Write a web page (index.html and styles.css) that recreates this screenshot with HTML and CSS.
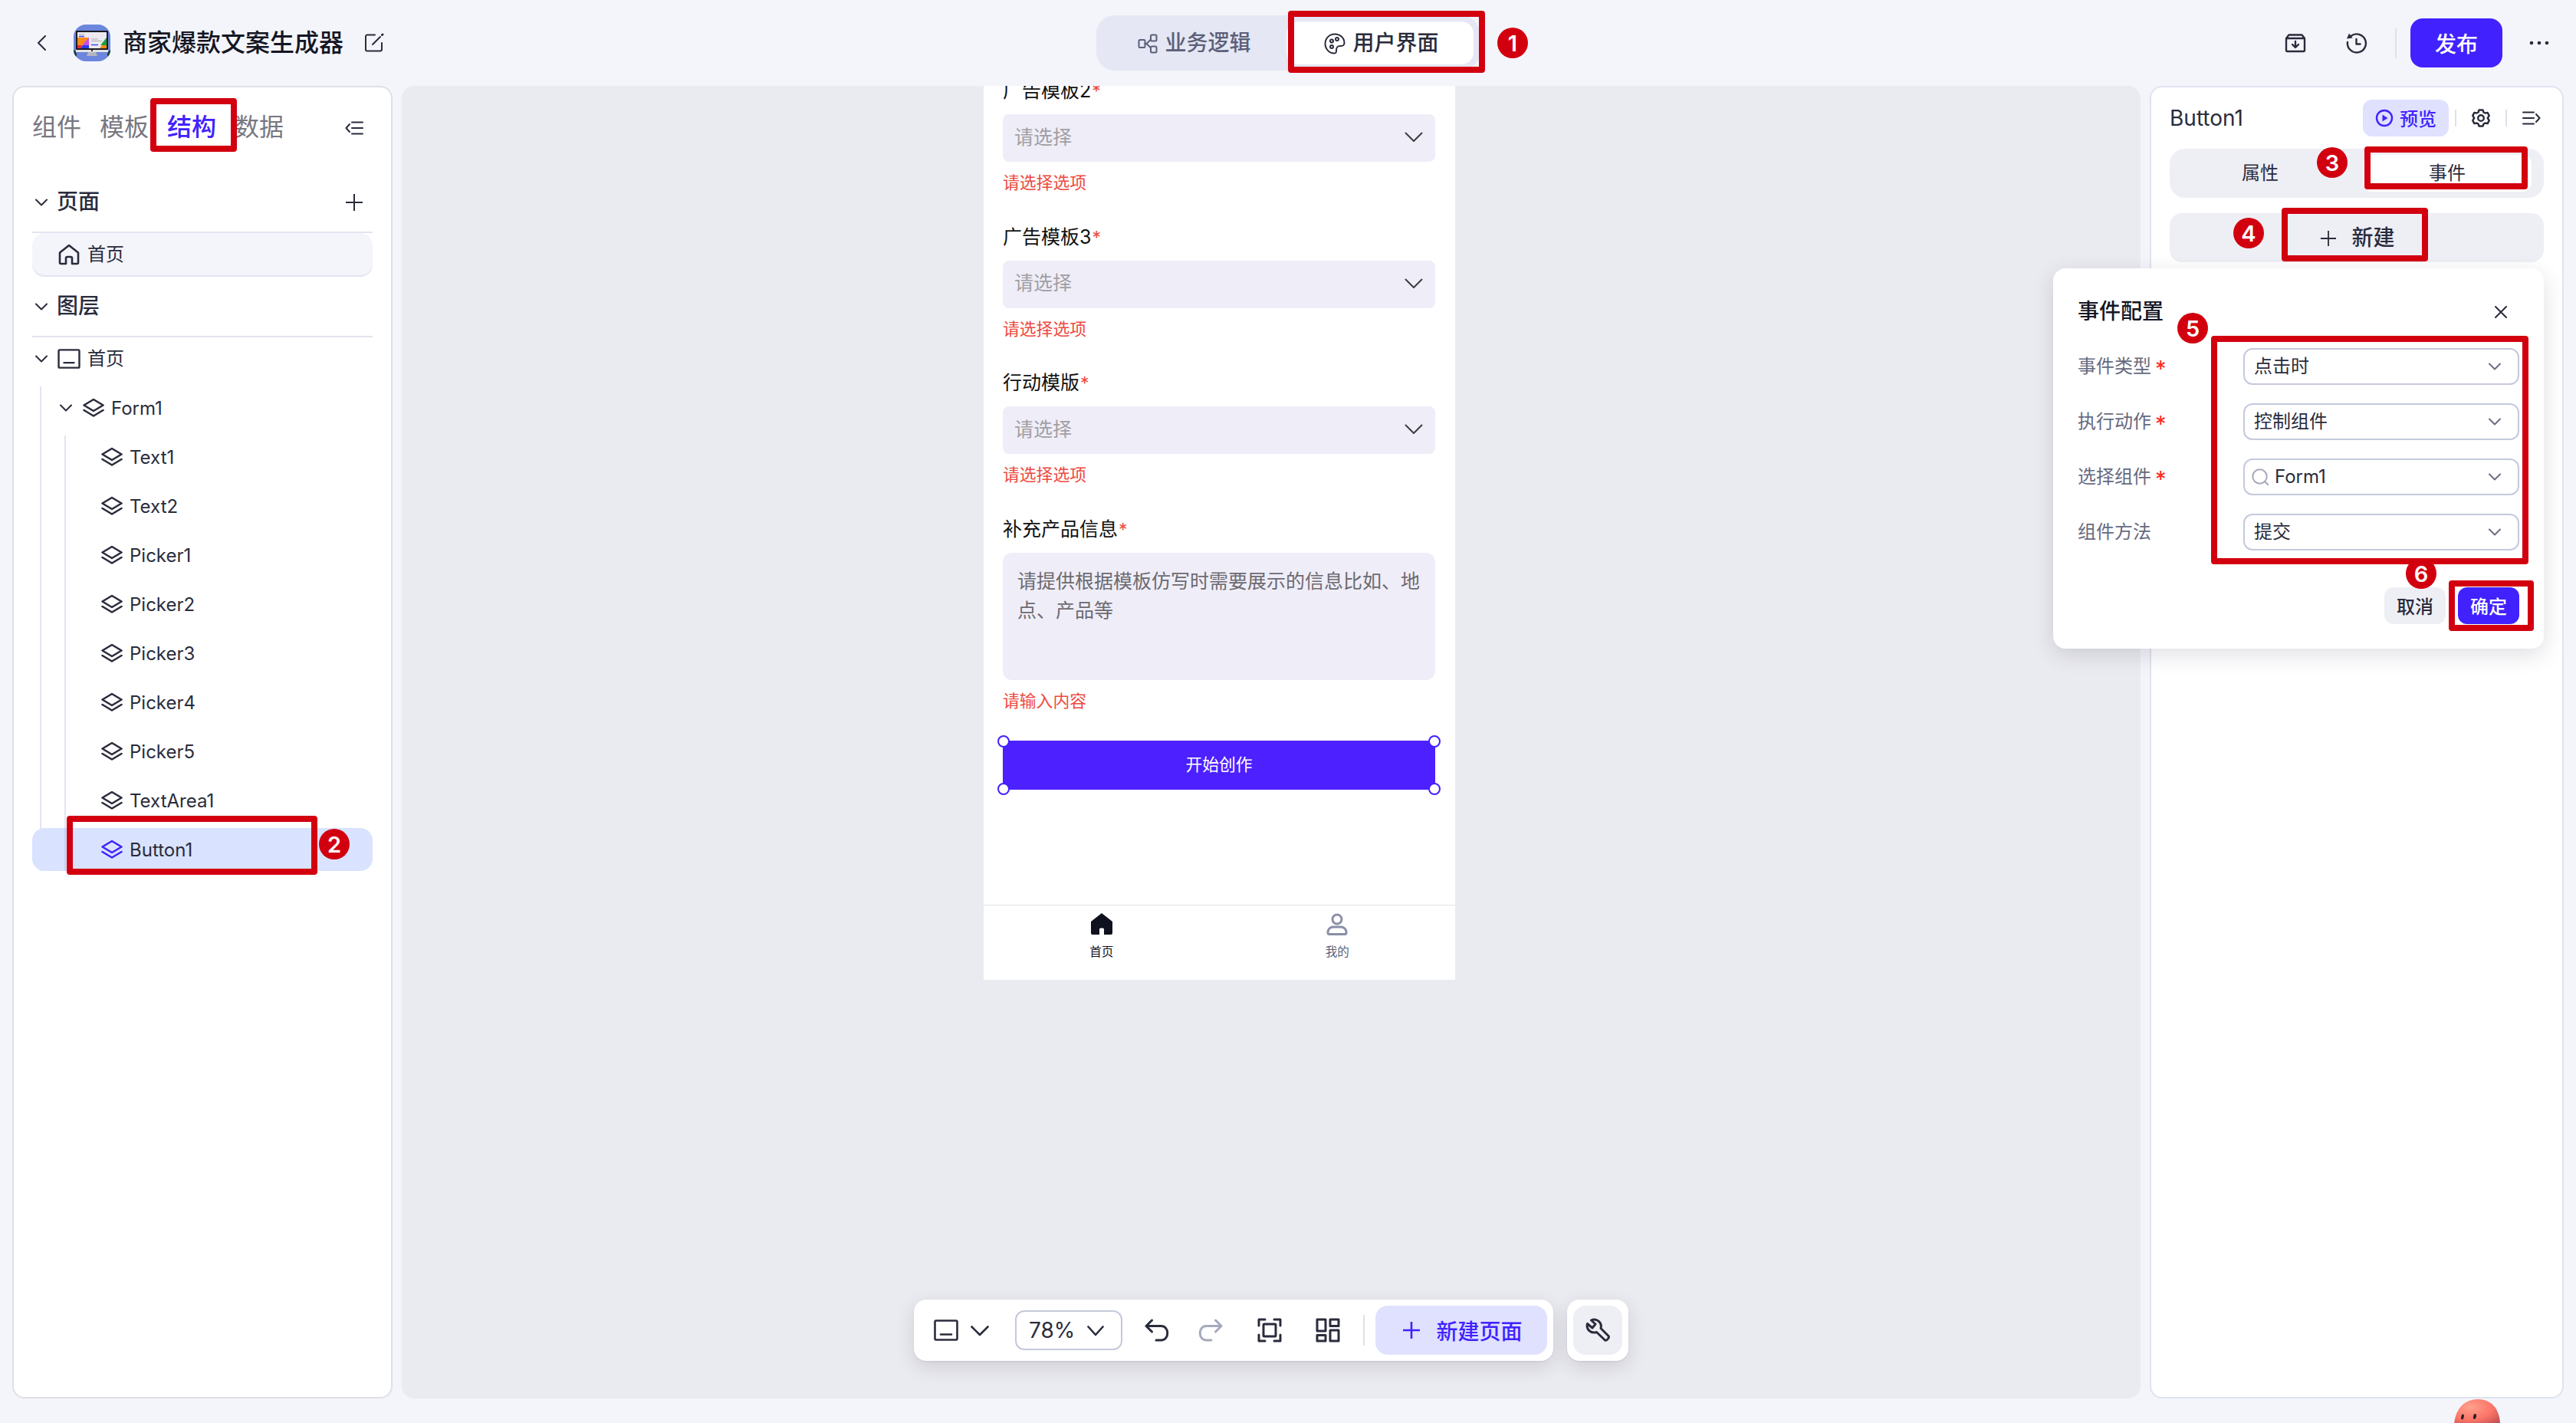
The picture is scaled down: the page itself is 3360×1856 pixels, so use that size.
FILE: index.html
```
<!DOCTYPE html>
<html lang="zh-CN">
<head>
    <meta charset="UTF-8">
    <title>商家爆款文案生成器</title>
    <link rel="stylesheet" href="styles.css">
</head>
<body>
    <!-- shared icons -->
    <svg class="sprite" width="0" height="0">
        <symbol id="i-down" viewBox="0 0 16 10"><path d="M1 1.500l7 7 7-7"/></symbol>
        <symbol id="i-layers" viewBox="0 0 28 26"><path d="M14 2L26.500 9.500 14 17 1.500 9.500z"/><path d="M1.500 16L14 23.500 26.500 16"/></symbol>
        <symbol id="i-frame" viewBox="0 0 32 28"><rect x="1.500" y="1.500" width="29" height="25" rx="1.500"/><path d="M9 19.500h14"/></symbol>
        <symbol id="i-plus" viewBox="0 0 22 22"><path d="M11 0v22M0 11h22"/></symbol>
    </svg>

    <header class="topbar">
        <div class="topbar-left">
            <svg class="icon back" width="12" height="20" viewBox="0 0 12 20"><path d="M11 1L2 10l9 9"/></svg>
            <svg class="app-logo" width="48" height="48" viewBox="0 0 48 48">
                <rect width="48" height="48" rx="16" fill="#6b86dc"/>
                <path d="M0 33c4 2 4 6 4 9-3-2-4-5-4-9zM48 33c-4 2-4 6-4 9 3-2 4-5 4-9z" fill="#163a2c"/>
                <rect x="3" y="8" width="42" height="25" rx="1" fill="#1d1b22"/>
                <rect x="5" y="10" width="38" height="21" fill="#eceaf0"/>
                <path d="M5 17h15v14H5z" fill="#ff8a14"/>
                <path d="M20 17v10h-9z" fill="#cc4be8"/>
                <path d="M9 31l3-4h8v4z" fill="#2b39f0"/>
                <path d="M5 27h6l-2 4H5z" fill="#e8283c"/>
                <path d="M43 17v10h-8z" fill="#16a33a"/>
                <path d="M34 31l3-4h6v4z" fill="#ff8a14"/>
                <path d="M7 15.500h7M23 26.500h9" stroke="#3c4be8" stroke-width="1.500"/>
                <path d="M7 13h7M23 19h9M23 21.500h14" stroke="#aaa" stroke-width="1"/>
                <path d="M3 33h42v3H3z" fill="#e2e2e6"/>
                <path d="M19 36h10l2 5H17z" fill="#b4b6bf"/>
                <rect x="23" y="33" width="2" height="2" fill="#333"/>
            </svg>
            <h1 class="app-title">商家爆款文案生成器</h1>
            <svg class="icon" width="26" height="26" viewBox="0 0 26 26"><path d="M14 2.500H4A2 2 0 0 0 2 4.500v17a2 2 0 0 0 2 2h17a2 2 0 0 0 2-2V13M11 15L21 5"/><path d="M23.500 2.500l.5-.5" stroke-width="3"/></svg>
        </div>
        <div class="mode-switch">
            <div class="mode">
                <svg class="icon" width="26" height="26" viewBox="0 0 26 26"><rect x="1.500" y="8" width="8" height="10" rx="1.500"/><rect x="17" y="1.500" width="7.500" height="8" rx="1.500"/><rect x="17" y="16.500" width="7.500" height="8" rx="1.500"/><path d="M9.500 13h2M16.500 8l-5 5 5 5"/></svg>
                <span>业务逻辑</span>
            </div>
            <div class="mode active">
                <svg class="icon" width="28" height="28" viewBox="0 0 28 28"><path d="M14 1.500C7 1.500 1.500 7 1.500 14S7 26.500 13 26.500c3 0 3-1.500 3-3.500 0-4 1-6 5-6 3.500 0 5.500-.5 5.500-4C26.500 6.500 21 1.500 14 1.500z"/><circle cx="10" cy="10.500" r="2"/><circle cx="17" cy="8" r="2"/><circle cx="10" cy="18" r="2"/></svg>
                <span>用户界面</span>
            </div>
        </div>
        <div class="topbar-right">
            <svg class="icon mid" width="28" height="26" viewBox="0 0 28 26"><path d="M2 7v15.500a1.500 1.500 0 0 0 1.500 1.500h21a1.500 1.500 0 0 0 1.500-1.500V7zM2 7l3.500-4.500h17L26 7M14 11v7.500M10 15l4 4 4-4"/></svg>
            <svg class="icon mid history" width="28" height="28" viewBox="0 0 28 28"><path d="M6.500 5A12 12 0 1 1 2 13M13.500 9v6.500h5"/><path class="fill" d="M4 1.500l4.500 6-7.500 1z"/></svg>
            <span class="v-line"></span>
            <button class="publish">发布</button>
            <svg class="dots" width="26" height="6" viewBox="0 0 26 6"><circle cx="3" cy="3" r="2.300"/><circle cx="13" cy="3" r="2.300"/><circle cx="23" cy="3" r="2.300"/></svg>
        </div>
    </header>

    <main class="workspace">
        <aside class="panel structure">
            <nav class="side-tabs">
                <span>组件</span>
                <span>模板</span>
                <span class="active">结构</span>
                <span>数据</span>
                <svg class="icon collapse" width="24" height="18" viewBox="0 0 24 18"><path d="M9 1.500h14M9 9h14M9 16.500h14M6 4L1.500 9 6 14"/></svg>
            </nav>
            <div class="section pages">
                <svg class="icon" width="16" height="10"><use href="#i-down"/></svg>
                <span>页面</span>
                <svg class="icon add" width="22" height="22"><use href="#i-plus"/></svg>
            </div>
            <div class="page-item">
                <svg class="icon bold" width="28" height="28" viewBox="0 0 28 28"><path d="M2 11.500L14 2l12 9.500v13a1.500 1.500 0 0 1-1.500 1.500H18v-7a2 2 0 0 0-2-2h-4a2 2 0 0 0-2 2v7H3.500A1.500 1.500 0 0 1 2 24.500z"/></svg>
                <span>首页</span>
            </div>
            <div class="section">
                <svg class="icon" width="16" height="10"><use href="#i-down"/></svg>
                <span>图层</span>
            </div>
            <div class="node root">
                <svg class="icon" width="16" height="10"><use href="#i-down"/></svg>
                <svg class="icon frame bold" width="30" height="26"><use href="#i-frame"/></svg>
                <span>首页</span>
            </div>
            <div class="branch">
                <div class="node level-1">
                    <svg class="icon" width="16" height="10"><use href="#i-down"/></svg>
                    <svg class="icon bold" width="28" height="26"><use href="#i-layers"/></svg>
                    <span>Form1</span>
                </div>
                <div class="branch inner">
                    <div class="node leaf"><svg class="icon bold" width="28" height="26"><use href="#i-layers"/></svg><span>Text1</span></div>
                    <div class="node leaf"><svg class="icon bold" width="28" height="26"><use href="#i-layers"/></svg><span>Text2</span></div>
                    <div class="node leaf"><svg class="icon bold" width="28" height="26"><use href="#i-layers"/></svg><span>Picker1</span></div>
                    <div class="node leaf"><svg class="icon bold" width="28" height="26"><use href="#i-layers"/></svg><span>Picker2</span></div>
                    <div class="node leaf"><svg class="icon bold" width="28" height="26"><use href="#i-layers"/></svg><span>Picker3</span></div>
                    <div class="node leaf"><svg class="icon bold" width="28" height="26"><use href="#i-layers"/></svg><span>Picker4</span></div>
                    <div class="node leaf"><svg class="icon bold" width="28" height="26"><use href="#i-layers"/></svg><span>Picker5</span></div>
                    <div class="node leaf"><svg class="icon bold" width="28" height="26"><use href="#i-layers"/></svg><span>TextArea1</span></div>
                    <div class="node leaf selected"><svg class="icon bold" width="28" height="26"><use href="#i-layers"/></svg><span>Button1</span></div>
                </div>
            </div>
        </aside>

        <section class="canvas">
            <div class="phone">
                <div class="phone-form">
                    <div class="field first">
                        <label>广告模板2<i>*</i></label>
                        <div class="picker"><span>请选择</span><svg class="icon" width="24" height="14" viewBox="0 0 24 14"><path d="M1.500 1.500L12 12 22.500 1.500"/></svg></div>
                        <p class="error">请选择选项</p>
                    </div>
                    <div class="field">
                        <label>广告模板3<i>*</i></label>
                        <div class="picker"><span>请选择</span><svg class="icon" width="24" height="14" viewBox="0 0 24 14"><path d="M1.500 1.500L12 12 22.500 1.500"/></svg></div>
                        <p class="error">请选择选项</p>
                    </div>
                    <div class="field">
                        <label>行动模版<i>*</i></label>
                        <div class="picker"><span>请选择</span><svg class="icon" width="24" height="14" viewBox="0 0 24 14"><path d="M1.500 1.500L12 12 22.500 1.500"/></svg></div>
                        <p class="error">请选择选项</p>
                    </div>
                    <div class="field">
                        <label>补充产品信息<i>*</i></label>
                        <div class="textarea">请提供根据模板仿写时需要展示的信息比如、地点、产品等</div>
                        <p class="error">请输入内容</p>
                    </div>
                    <div class="submit">
                        开始创作
                        <b class="handle tl"></b><b class="handle tr"></b><b class="handle bl"></b><b class="handle br"></b>
                    </div>
                </div>
                <div class="tabbar">
                    <div class="tab current">
                        <svg width="28" height="28" viewBox="0 0 28 28"><path d="M14 0L28 11v15a2 2 0 0 1-2 2h-9v-7a1.500 1.500 0 0 0-1.500-1.500h-3A1.500 1.500 0 0 0 11 21v7H2a2 2 0 0 1-2-2V11z" fill="#0f111e"/></svg>
                        <span>首页</span>
                    </div>
                    <div class="tab">
                        <svg class="icon user" width="28" height="30" viewBox="0 0 28 30"><circle cx="14" cy="8" r="6"/><path d="M2 25.500V25c0-4 3-7 7-7h10c4 0 7 3 7 7v.5a2 2 0 0 1-2 2H4a2 2 0 0 1-2-2z"/></svg>
                        <span>我的</span>
                    </div>
                </div>
            </div>

            <div class="dock">
                <div class="toolbar">
                    <svg class="icon bold" width="34" height="28"><use href="#i-frame"/></svg>
                    <svg class="icon bold t-down" width="24" height="14" viewBox="0 0 24 14"><path d="M1.500 1.500L12 12 22.500 1.500"/></svg>
                    <div class="zoom-box">
                        <span>78%</span>
                        <svg class="icon bold" width="22" height="14" viewBox="0 0 22 14"><path d="M1.500 1.500L11 12l9.500-10.500"/></svg>
                    </div>
                    <svg class="icon heavy undo" width="32" height="30" viewBox="0 0 32 30"><path d="M9.500 2L2 9.500 9.500 17M2 9.500h19.500c11 0 11 18.500 0 18.500H15"/></svg>
                    <svg class="icon heavy redo" width="32" height="30" viewBox="0 0 32 30"><path d="M22.500 2L30 9.500 22.500 17M30 9.500H10.500C-.5 9.500-.5 28 10.500 28H17"/></svg>
                    <svg class="icon heavy fit" width="32" height="32" viewBox="0 0 32 32"><rect x="8" y="8" width="16" height="16" rx="1"/><path d="M2 10V2h8M22 2h8v8M30 22v8h-8M10 30H2v-8"/></svg>
                    <svg class="icon heavy grid" width="32" height="32" viewBox="0 0 32 32"><rect x="2" y="2" width="11" height="15"/><rect x="19" y="2" width="11" height="8.500"/><rect x="2" y="22.500" width="11" height="7.500"/><rect x="19" y="16" width="11" height="14"/></svg>
                    <span class="v-line"></span>
                    <button class="new-page"><svg class="icon bold" width="22" height="22"><use href="#i-plus"/></svg>新建页面</button>
                </div>
                <div class="tool-box">
                    <div class="tool-btn">
                        <svg class="icon heavy" width="32" height="32" viewBox="0 0 32 32"><path d="M7.500 3C14.500-.5 22 6 20 13.500l10 10c1.500 2-2 6.500-4.500 5.500L14.500 18.500C7 21 .5 14.500 2.500 7.500L9 13l4-5z"/></svg>
                    </div>
                </div>
            </div>
        </section>

        <aside class="panel inspector">
            <div class="insp-head">
                <span class="insp-name">Button1</span>
                <button class="preview">
                    <svg class="icon mid" width="24" height="24" viewBox="0 0 24 24"><circle cx="12" cy="12" r="10"/><path class="fill" d="M9.500 7.500l7 4.500-7 4.500z"/></svg>
                    <span>预览</span>
                </button>
                <span class="v-line"></span>
                <svg class="icon mid gear" width="24" height="24" viewBox="0 0 24 24"><path d="M9.500 1.500h5l1 3 2 1 3.200-.6 2 4L20.800 12l1.900 3.100-2 4-3.200-.6-2 1-1 3h-5l-1-3-2-1-3.200.6-2-4L3.200 12 1.300 8.900l2-4 3.200.6 2-1z"/><circle cx="12" cy="12" r="3.800"/></svg>
                <span class="v-line"></span>
                <svg class="icon" width="24" height="18" viewBox="0 0 24 18"><path d="M1 1.500h14M1 9h14M1 16.500h14M18 4l4.500 5-4.500 5"/></svg>
            </div>
            <div class="insp-tabs">
                <span>属性</span>
                <span class="active">事件</span>
            </div>
            <div class="new-event">
                <svg class="icon" width="20" height="20" viewBox="0 0 22 22"><path d="M11 0v22M0 11h22"/></svg>
                <span>新建</span>
            </div>
        </aside>
    </main>

    <!-- event dialog, floats over canvas and inspector -->
    <div class="dialog">
        <div class="dialog-head">
            <h2>事件配置</h2>
            <svg class="icon" width="16" height="16" viewBox="0 0 16 16"><path d="M1 1l14 14M15 1L1 15"/></svg>
        </div>
        <div class="row">
            <span class="row-label">事件类型<i>*</i></span>
            <div class="select"><span>点击时</span><svg class="icon" width="16" height="10"><use href="#i-down"/></svg></div>
        </div>
        <div class="row">
            <span class="row-label">执行动作<i>*</i></span>
            <div class="select"><span>控制组件</span><svg class="icon" width="16" height="10"><use href="#i-down"/></svg></div>
        </div>
        <div class="row">
            <span class="row-label">选择组件<i>*</i></span>
            <div class="select search">
                <svg class="icon glass" width="22" height="22" viewBox="0 0 22 22"><circle cx="10.500" cy="10.500" r="9.200"/><path d="M17 17l4.500 4.500"/></svg>
                <span>Form1</span><svg class="icon" width="16" height="10"><use href="#i-down"/></svg>
            </div>
        </div>
        <div class="row">
            <span class="row-label">组件方法</span>
            <div class="select"><span>提交</span><svg class="icon" width="16" height="10"><use href="#i-down"/></svg></div>
        </div>
        <div class="dialog-foot">
            <button class="cancel">取消</button>
            <button class="ok">确定</button>
        </div>
    </div>

    <!-- help assistant peeking from the bottom edge -->
    <svg class="mascot" width="60" height="31" viewBox="0 0 60 31">
        <defs>
            <radialGradient id="skin" cx="0.35" cy="0.3" r="0.9"><stop offset="0" stop-color="#ffa08c"/><stop offset="0.55" stop-color="#fb7468"/><stop offset="1" stop-color="#b84a50"/></radialGradient>
        </defs>
        <path d="M0 34C1 12 14 0 31 0c17 0 29 12 29 34z" fill="url(#skin)"/>
        <ellipse cx="11" cy="23" rx="1.800" ry="3.500" transform="rotate(10 11 23)" fill="#2c2426"/>
        <ellipse cx="27" cy="22.500" rx="2" ry="3.500" transform="rotate(10 27 22.500)" fill="#2c2426"/>
    </svg>

    <!-- tutorial marks -->
    <div class="badge b1">1</div>
    <div class="badge b2">2</div>
    <div class="badge b3">3</div>
    <div class="badge b4">4</div>
    <div class="badge b5">5</div>
    <div class="badge b6">6</div>
    <div class="mark m-mode"></div>
    <div class="mark m-tab"></div>
    <div class="mark m-node"></div>
    <div class="mark m-event"></div>
    <div class="mark m-new"></div>
    <div class="mark m-fields"></div>
    <div class="mark m-ok"></div>
</body>
</html>
```
FILE: styles.css
```
* {
    box-sizing: border-box;
}

body {
    margin: 0;
    width: 3360px;
    height: 1856px;
    overflow: hidden;
    position: relative;
    display: flex;
    flex-direction: column;
    background: #f4f5fb;
    color: #2a2c3c;
    font-family: Inter, "Noto Sans CJK SC", sans-serif;
    font-size: 24px;
    line-height: 1.4;
}

h1, h2, p {
    margin: 0;
}

i {
    font-style: normal;
}

button {
    border: none;
    padding: 0;
    font-family: inherit;
    font-weight: 500;
    color: inherit;
}

.sprite {
    position: absolute;
}

svg {
    flex: none;
    display: block;
}

.icon {
    fill: none;
    stroke: currentColor;
    stroke-width: 2;
    stroke-linecap: round;
    stroke-linejoin: round;
}

.icon.mid {
    stroke-width: 2.4;
}

.icon.bold {
    stroke-width: 2.6;
}

.icon.heavy {
    stroke-width: 3;
}

.icon .fill {
    fill: currentColor;
    stroke: none;
}

.v-line {
    width: 2px;
    flex: none;
    background: #dfe1ea;
}

/* top bar */
.topbar {
    height: 112px;
    flex: none;
    display: grid;
    grid-template-columns: 1430px 500px 1fr;
}

.topbar-left {
    height: 112px;
    padding-left: 48px;
    display: flex;
    align-items: center;
}

.app-logo {
    margin-left: 36px;
}

.app-title {
    margin: 0 27px 0 16px;
    font-size: 32px;
    font-weight: 500;
    color: #141624;
}

.mode-switch {
    height: 72px;
    margin-top: 20px;
    padding: 8px;
    border-radius: 24px;
    background: #e5e7f4;
    display: flex;
}

.mode {
    flex: 1;
    padding-top: 1px;
    display: flex;
    align-items: center;
    justify-content: center;
    gap: 9px;
    border-radius: 16px;
    font-size: 28px;
    font-weight: 500;
    color: #5c5f78;
}

.mode.active {
    padding-left: 4px;
    background: #fff;
    color: #2a2c3c;
}

.topbar-right {
    height: 112px;
    padding-right: 35px;
    display: flex;
    align-items: center;
    justify-content: flex-end;
}

.history {
    margin: 0 36px 0 52px;
}

.topbar-right .v-line {
    height: 40px;
}

.publish {
    width: 120px;
    height: 64px;
    margin: 0 35px 0 18px;
    border-radius: 16px;
    background: #4122ff;
    color: #fff;
    font-size: 28px;
}

.dots {
    fill: #2a2c3c;
}

/* workspace */
.workspace {
    height: 1712px;
    padding: 0 16px;
    display: flex;
    gap: 12px;
}

.panel {
    background: #fff;
    border: 2px solid #dfe3f0;
    border-radius: 16px;
    padding: 0 24px;
}

.structure {
    width: 496px;
    border-color: #dfe0e4;
}

.side-tabs {
    height: 104px;
    padding-top: 1px;
    display: flex;
    align-items: center;
    gap: 24px;
    font-size: 32px;
    color: #777781;
}

.side-tabs .active {
    color: #4122ff;
    font-weight: 500;
}

.collapse {
    margin-left: auto;
    margin-right: 12px;
    color: #2a2c3c;
}

.section {
    height: 79px;
    padding: 1px 13px 0 4px;
    border-bottom: 2px solid #e2e4f0;
    display: flex;
    align-items: center;
    gap: 12px;
    font-size: 28px;
    font-weight: 500;
}

.pages {
    height: 80px;
    margin-top: 6px;
}

.add {
    margin-left: auto;
}

.page-item {
    height: 55px;
    padding-left: 34px;
    border-radius: 16px;
    background: #f4f5fb;
    box-shadow: 0 2px 0 #e2e4f0;
    margin-bottom: 2px;
    display: flex;
    align-items: center;
    gap: 10px;
}

.node {
    height: 56px;
    display: flex;
    align-items: center;
    border-radius: 16px;
}

.root {
    padding-left: 4px;
}

.root .frame {
    margin: 0 9px 0 13px;
}

.branch {
    position: relative;
    margin-top: 8px;
    display: flex;
    flex-direction: column;
    gap: 8px;
}

.branch.inner {
    margin-top: 0;
}

/* indent guides */
.branch::before {
    content: "";
    position: absolute;
    left: 10px;
    top: 0;
    bottom: 0;
    width: 2px;
    background: rgba(140, 150, 200, 0.25);
}

.branch.inner::before {
    left: 42px;
}

.level-1 {
    padding-left: 36px;
}

.level-1 .bold {
    margin: 0 9px 0 14px;
}

.leaf {
    padding-left: 90px;
    gap: 9px;
}

.leaf span,
.level-1 span {
    padding-top: 1px;
}

.selected {
    background: #d9e3ff;
}

.selected .icon {
    color: #4122ff;
}

/* canvas */
.canvas {
    width: 2268px;
    border-radius: 16px;
    background: #eaebf0;
    overflow: hidden;
    display: flex;
    flex-direction: column;
    align-items: center;
}

.phone {
    width: 615px;
    height: 1166px;
    flex: none;
    margin-right: 135px;
    background: #fff;
    display: flex;
    flex-direction: column;
}

.phone-form {
    height: 1068px;
    padding: 0 26px 0 25px;
}

.field {
    height: 190.700px;
}

.field.first {
    margin-top: -13px;
}

.field label {
    display: block;
    height: 50px;
    padding-top: 1px;
    font-size: 25px;
    line-height: 36px;
    color: #111;
}

.field label i {
    font-size: 23px;
    color: #ee4a40;
    position: relative;
    top: 0;
    margin-left: 1px;
}

.picker {
    height: 62px;
    padding: 0 16px 2px 15px;
    border-radius: 8px;
    background: #efedf8;
    display: flex;
    align-items: center;
    justify-content: space-between;
    font-size: 25px;
    color: #a09fa4;
}

.picker .icon {
    color: #3c3c40;
}

.error {
    margin-top: 11px;
    font-size: 21.8px;
    line-height: 32px;
    color: #ee4a40;
}

.textarea {
    height: 166px;
    padding: 18px 18px 0 19px;
    border-radius: 12px;
    background: #efedf8;
    font-size: 25px;
    line-height: 38px;
    color: #6c6b70;
}

.submit {
    position: relative;
    height: 64px;
    margin-top: 104px;
    padding-bottom: 1px;
    background: #4d20ff;
    color: #fff;
    font-size: 21.8px;
    display: flex;
    align-items: center;
    justify-content: center;
}

.handle {
    position: absolute;
    width: 16px;
    height: 16px;
    border: 2px solid #4122ff;
    border-radius: 50%;
    background: #fff;
}

.tl { left: -7px; top: -7px; }
.tr { right: -7px; top: -7px; }
.bl { left: -7px; bottom: -7px; }
.br { right: -7px; bottom: -7px; }

.tabbar {
    flex: 1;
    border-top: 1px solid #e4e4e6;
    display: flex;
}

.tab {
    flex: 1;
    padding-top: 10px;
    display: flex;
    flex-direction: column;
    align-items: center;
    font-size: 15.6px;
    color: #5c5f78;
}

.tab span {
    margin-top: 12px;
}

.current {
    color: #0f111e;
}

.user {
    color: #8a8fa8;
    stroke-width: 3;
    margin-bottom: -2px;
}

.dock {
    margin-top: 417px;
    display: flex;
    gap: 18px;
}

.toolbar,
.tool-box {
    height: 80px;
    padding: 8px;
    border-radius: 16px;
    background: #fff;
    box-shadow: 0 8px 24px rgba(40, 30, 50, 0.14), 0 1px 2px rgba(60, 60, 120, 0.1);
    display: flex;
    align-items: center;
}

.toolbar {
    width: 834px;
    padding-left: 25px;
}

.t-down {
    margin: 2px 34px 0 15px;
}

.zoom-box {
    width: 140px;
    height: 52px;
    padding: 1px 22px 0 16px;
    border: 2px solid #c5c9dc;
    border-radius: 12px;
    display: flex;
    align-items: center;
    justify-content: space-between;
    font-size: 28px;
}

.undo {
    margin: 0 38px 0 29px;
}

.redo {
    color: #a5a9bc;
}

.fit {
    margin: 0 44px 0 45px;
}

.toolbar .v-line {
    height: 40px;
    margin: 0 14px 0 30px;
}

.new-page {
    width: 224px;
    height: 64px;
    padding: 0 0 1px 4px;
    border-radius: 16px;
    background: #dfe1ff;
    color: #4122ff;
    font-size: 28px;
    display: flex;
    align-items: center;
    justify-content: center;
    gap: 21px;
}

.tool-btn {
    width: 64px;
    height: 64px;
    border-radius: 16px;
    background: #eeeff5;
    display: flex;
    align-items: center;
    justify-content: center;
}

/* inspector */
.inspector {
    width: 540px;
}

.insp-head {
    height: 80px;
    display: flex;
    align-items: center;
}

.insp-name {
    margin-right: auto;
    padding-top: 2px;
    font-size: 28px;
}

.preview {
    width: 112px;
    height: 48px;
    margin-right: 8px;
    border-radius: 12px;
    background: #dfe1ff;
    color: #4122ff;
    font-size: 24px;
    display: flex;
    align-items: center;
    justify-content: center;
    gap: 8px;
}

.preview span {
    padding-bottom: 2px;
}

.insp-head .v-line {
    height: 22px;
    margin-right: 20px;
}

.gear {
    margin-right: 20px;
}

.insp-head > .icon:last-child {
    margin-right: 4px;
}

.insp-tabs {
    height: 64px;
    padding: 8px 16px 8px 8px;
    border-radius: 20px;
    background: #eeeff5;
    display: flex;
    gap: 24px;
}

.insp-tabs span {
    flex: 1;
    display: flex;
    align-items: center;
    justify-content: center;
    border-radius: 12px;
}

.insp-tabs .active {
    background: #fff;
}

.new-event {
    height: 64px;
    margin-top: 20px;
    padding: 2px 0 0 3px;
    border-radius: 16px;
    background: #eeeff5;
    display: flex;
    align-items: center;
    justify-content: center;
    gap: 20px;
    font-size: 28px;
    font-weight: 500;
}

/* dialog */
.dialog {
    position: absolute;
    left: 2678px;
    top: 350px;
    width: 640px;
    height: 496px;
    padding: 32px;
    border-radius: 16px;
    background: #fff;
    box-shadow: 0 8px 28px rgba(40, 30, 60, 0.15);
}

.dialog-head {
    height: 48px;
    margin-bottom: 24px;
    padding: 1px 16px 0 0;
    display: flex;
    align-items: center;
    justify-content: space-between;
}

.dialog-head h2 {
    font-size: 28px;
    font-weight: 500;
    color: #141624;
}

.row {
    height: 48px;
    margin-bottom: 24px;
    display: flex;
    align-items: center;
    justify-content: space-between;
}

.row-label {
    display: flex;
    color: #666a80;
}

.row-label i {
    margin-left: 5px;
    padding-top: 5px;
    font-size: 29px;
    line-height: 30px;
    color: #ff2a1f;
}

.select {
    width: 360px;
    height: 48px;
    padding: 0 22px 0 12px;
    border: 2px solid #c5c9dc;
    border-radius: 12px;
    display: flex;
    align-items: center;
    justify-content: space-between;
}

.select > .icon:last-child {
    color: #6a6d80;
}

.search {
    padding-left: 9px;
}

.search span {
    margin: 0 auto 0 8px;
}

.glass {
    color: #a5a9bc;
}

.dialog-foot {
    display: flex;
    justify-content: flex-end;
    gap: 16px;
    padding-top: 24px;
}

.dialog-foot button {
    width: 80px;
    height: 48px;
    padding-bottom: 2px;
    border-radius: 12px;
    font-size: 24px;
    background: #eeeff5;
}

.dialog-foot .ok {
    background: #4122ff;
    color: #fff;
}

.mascot {
    position: absolute;
    left: 3201px;
    top: 1825px;
}

/* tutorial marks */
.mark {
    position: absolute;
    border: 8px solid #d2000f;
    border-radius: 4px;
}

.m-mode { left: 1680px; top: 14px; width: 257px; height: 81px; }
.m-tab { left: 196px; top: 128px; width: 113px; height: 70px; }
.m-node { left: 87px; top: 1064px; width: 327px; height: 77px; }
.m-event { left: 3084px; top: 191px; width: 213px; height: 56px; }
.m-new { left: 2976px; top: 271px; width: 191px; height: 70px; }
.m-fields { left: 2884px; top: 438px; width: 414px; height: 298px; }
.m-ok { left: 3194px; top: 757px; width: 111px; height: 66px; }

.badge {
    position: absolute;
    width: 40px;
    height: 40px;
    border-radius: 50%;
    background: #d2000f;
    color: #fff;
    font-size: 29px;
    font-weight: 600;
    line-height: 41px;
    text-align: center;
}

.b1 { left: 1953px; top: 36px; }
.b2 { left: 416px; top: 1081px; }
.b3 { left: 3022px; top: 192px; }
.b4 { left: 2913px; top: 284px; }
.b5 { left: 2840px; top: 408px; }
.b6 { left: 3138px; top: 728px; }
```
